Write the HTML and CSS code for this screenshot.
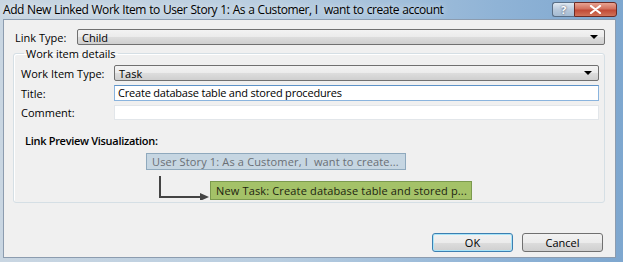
FILE: index.html
```html
<!DOCTYPE html>
<html lang="en">
<head>
    <meta charset="UTF-8">
    <title>Add New Linked Work Item</title>
    <link rel="stylesheet" href="styles.css">
</head>
<body>
    <div class="window">
        <div class="titlebar">
            <span class="caption">Add New Linked Work Item to User Story 1: As a Customer, I&nbsp; want to create account</span>
            <div class="caption-buttons">
                <span class="cap-btn help">?</span>
                <span class="cap-btn close">
                    <svg width="13" height="9" viewBox="0 0 13 9"><path d="M2 1 L11 8 M11 1 L2 8" stroke="#fff" stroke-width="2.2" stroke-linecap="round"/></svg>
                </span>
            </div>
        </div>

        <div class="client">
            <div class="link-row">
                <label class="link-label">Link Type:</label>
                <div class="combo wide"><span>Child</span><i class="arrow"></i></div>
            </div>

            <fieldset class="group">
                <legend>Work item details</legend>
                <div class="form-grid">
                    <label>Work Item Type:</label>
                    <div class="combo"><span>Task</span><i class="arrow"></i></div>
                    <label>Title:</label>
                    <div class="textbox focused">Create database table and stored procedures</div>
                    <label>Comment:</label>
                    <div class="textbox"></div>
                </div>

                <div class="preview-title">Link Preview Visualization:</div>
                <div class="preview">
                    <div class="node parent">User Story 1: As a Customer, I&nbsp; want to create...</div>
                    <div class="child-row">
                        <svg class="connector" width="52" height="24" viewBox="0 0 52 24">
                            <path d="M2 0 V21 H44" fill="none" stroke="#444" stroke-width="2"/>
                            <path d="M42 17 L51 21 L42 25 Z" fill="#444"/>
                        </svg>
                        <div class="node child">New Task: Create database table and stored p...</div>
                    </div>
                </div>
            </fieldset>

            <div class="buttons">
                <button class="btn default">OK</button>
                <button class="btn">Cancel</button>
            </div>
        </div>
    </div>
</body>
</html>
```

FILE: styles.css
```css
body {
    margin: 0;
    font-family: "Open Sans", "Noto Sans", sans-serif;
    font-size: 11px;
    color: #000;
}
.window {
    width: 623px;
    height: 262px;
    background: linear-gradient(to right, #c9d6e2 0%, #b8cde0 45%, #8fb3d6 80%, #7ea7cf 100%);
    display: flex;
    flex-direction: column;
    box-sizing: border-box;
    padding: 0 7px 4px 3px;
}
.titlebar {
    height: 19px;
    display: flex;
    align-items: flex-start;
    justify-content: space-between;
}
.caption {
    font-size: 12px;
    line-height: 19px;
    letter-spacing: -0.45px;
    word-spacing: 0.5px;
    text-shadow: 0 0 6px rgba(255,255,255,0.9);
}
.caption-buttons {
    display: flex;
    margin-top: 2px;
    margin-right: -1px;
}
.cap-btn {
    height: 13px;
    display: flex;
    align-items: center;
    justify-content: center;
    border: 1px solid #5a6f86;
}
.help {
    width: 21px;
    border-radius: 3px 0 0 3px;
    border-right: none;
    background: linear-gradient(#dfe8f1, #b9cadc 50%, #a5bbd2);
    color: #fff;
    font-weight: bold;
    font-size: 11px;
    text-shadow: 0 0 2px #334;
}
.close {
    width: 41px;
    border-radius: 0 3px 3px 0;
    border-color: #6d2b24;
    background: linear-gradient(#e8a493, #d2705c 45%, #c14a36 55%, #d0735a);
}
.client {
    flex: 1;
    background: #f0f0f0;
    border: 1px solid #8c9caf;
    display: flex;
    flex-direction: column;
}
.link-row {
    display: flex;
    align-items: center;
    margin-top: 9px;
    padding-left: 11px;
}
.link-label {
    width: 62px;
}
.combo {
    height: 14px;
    border: 1px solid #707070;
    border-radius: 2px;
    background: linear-gradient(#f3f3f3, #ebebeb 50%, #dddddd 51%, #cfcfcf);
    display: flex;
    align-items: center;
    justify-content: space-between;
    padding: 0 6px 0 4px;
    flex: 1;
}
.combo.wide {
    margin-right: 10px;
}
.arrow {
    width: 0;
    height: 0;
    border-left: 4px solid transparent;
    border-right: 4px solid transparent;
    border-top: 4px solid #000;
}
.group {
    margin: 2px 10px 0 9px;
    padding: 5px 5px 0 7px;
    border: 1px solid #d5dfe5;
    border-radius: 3px;
    height: 156px;
    box-sizing: border-box;
    box-shadow: inset 1px 1px 0 #fff;
}
.group legend {
    padding: 0 2px;
    margin-left: 3px;
    line-height: 13px;
}
.form-grid {
    display: grid;
    grid-template-columns: 93px 1fr;
    grid-template-rows: 16px 16px 15px;
    row-gap: 4px;
    align-items: center;
}
.textbox {
    height: 100%;
    box-sizing: border-box;
    background: #fff;
    border: 1px solid #e2e6ea;
    padding-left: 3px;
    line-height: 14px;
    letter-spacing: -0.2px;
}
.textbox.focused {
    border-color: #8ab4de;
    border-top-color: #5e93c8;
}
.preview-title {
    font-weight: 600;
    letter-spacing: -0.3px;
    margin: 13px 0 0 4px;
}
.preview {
    margin: 5px 0 0 125px;
}
.node {
    height: 17px;
    box-sizing: border-box;
    line-height: 15px;
    padding-left: 5px;
    white-space: nowrap;
    letter-spacing: 0.15px;
}
.parent {
    width: 260px;
    background: #c6d6e2;
    border: 1px solid #8fa9bd;
    color: #6a6f75;
}
.child-row {
    display: flex;
    align-items: flex-end;
    margin-left: 12px;
}
.connector {
    display: block;
}
.child {
    width: 262px;
    height: 19px;
    line-height: 17px;
    background: #a4c268;
    border: 1px solid #7c9a4e;
    color: #1c2410;
    margin-top: 11px;
}
.buttons {
    display: flex;
    justify-content: flex-end;
    gap: 9px;
    margin-top: 30px;
    padding-right: 12px;
}
.btn {
    font-family: inherit;
    font-size: 11px;
    width: 81px;
    height: 19px;
    padding: 0;
    border: 1px solid #707070;
    border-radius: 3px;
    background: linear-gradient(#f2f2f2, #ebebeb 50%, #dddddd 51%, #cfcfcf);
    color: #000;
}
.btn.default {
    border-color: #3c7fb1;
    box-shadow: inset 0 0 0 1px #a8e4f8;
}
```
